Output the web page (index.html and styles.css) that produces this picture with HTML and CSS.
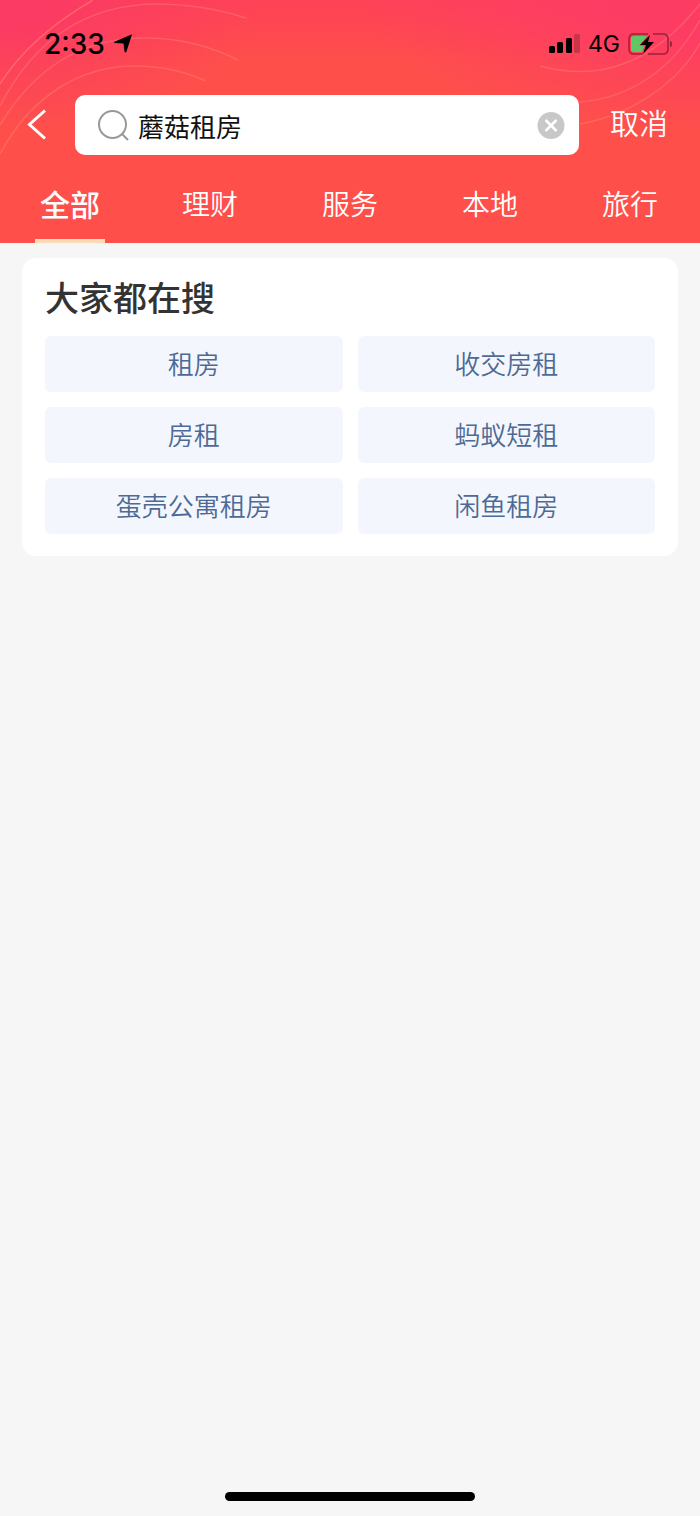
FILE: index.html
```html
<!DOCTYPE html>
<html lang="zh-CN">
<head>
    <meta charset="UTF-8">
    <meta name="viewport" content="width=device-width, initial-scale=1.0">
    <title>搜索</title>
    <link rel="stylesheet" href="styles.css">
</head>
<body>
    <header class="header">
        <!-- Decorative curves -->
        <svg class="header-lines" viewBox="0 0 700 243" preserveAspectRatio="none" aria-hidden="true">
            <path d="M0 84C22 49 55 22 93 0" opacity=".4"/>
            <path d="M0 106C35 38 88 5 155 4C190 4 218 9 246 18" opacity=".3"/>
            <path d="M0 125C36 65 84 38 145 38C180 38 210 46 238 60" opacity=".3"/>
            <path d="M0 154C32 94 82 66 135 66C165 66 186 72 206 81" opacity=".3"/>
            <path d="M540 66C600 82 652 64 700 4" opacity=".3"/>
            <path d="M580 102C630 98 672 70 700 20" opacity=".3"/>
            <path d="M580 124C635 114 680 80 700 43" opacity=".3"/>
        </svg>

        <!-- Status bar -->
        <div class="status-bar">
            <div class="status-group">
                <span class="time">2:33</span>
                <svg width="20" height="20" viewBox="0 0 20 20" aria-hidden="true">
                    <path d="M18.500 .5Q19 0 18.800 1L13.500 17.500Q12.500 19.500 11.500 17.500L10.500 9.500L2 9Q0 8.500 2 7.500Z"/>
                </svg>
            </div>
            <div class="status-group">
                <svg width="32" height="20" viewBox="0 0 32 20" aria-hidden="true">
                    <rect x="1" y="12" width="6" height="7" rx="1.500"/>
                    <rect x="9" y="8" width="6" height="11" rx="1.500"/>
                    <rect x="18" y="4" width="6" height="15" rx="1.500"/>
                    <rect x="26" y="0" width="6" height="19" rx="1.500" opacity=".2"/>
                </svg>
                <span class="network">4G</span>
                <svg width="46" height="22" viewBox="0 0 46 22" aria-hidden="true">
                    <path d="M20 1H6Q1 1 1 6V16Q1 21 6 21H15M25 1H35Q40 1 40 6V16Q40 21 35 21H20" fill="none" stroke="#9c2238" stroke-width="1.500"/>
                    <path d="M19 3H6Q3 3 3 6V16Q3 19 6 19H14L16 13H11Z" fill="#5fc763"/>
                    <path d="M22 2L12 12H18L15 21L26 9H20Z"/>
                    <path d="M42 8Q44 8 44 11Q44 14 42 14Z" fill="#9c2238"/>
                </svg>
            </div>
        </div>

        <!-- Search -->
        <form class="search-row">
            <button class="back-btn" type="button" aria-label="返回">
                <svg width="22" height="32" viewBox="0 0 22 32" aria-hidden="true">
                    <path d="M19 1.500L3.500 15.500L19 29.500" fill="none" stroke="#fff" stroke-width="3"/>
                </svg>
            </button>
            <div class="search-box">
                <svg width="32" height="32" viewBox="0 0 32 32" fill="none" stroke="#999" stroke-width="2" aria-hidden="true">
                    <circle cx="14.500" cy="15.500" r="13.500"/>
                    <path d="M24 25L30 31"/>
                </svg>
                <input class="search-input" type="text" value="蘑菇租房" aria-label="搜索">
                <button class="clear-btn" type="button" aria-label="清除">
                    <svg width="28" height="28" viewBox="0 0 28 28" aria-hidden="true">
                        <circle cx="14" cy="14.500" r="13.500" fill="#c8c8c8"/>
                        <path d="M8.500 9L19.500 20M19.500 9L8.500 20" stroke="#fff" stroke-width="2.500"/>
                    </svg>
                </button>
            </div>
            <button class="cancel-btn" type="button">取消</button>
        </form>

        <!-- Tabs -->
        <nav class="tabs">
            <a class="tab active" href="#">全部</a>
            <a class="tab" href="#">理财</a>
            <a class="tab" href="#">服务</a>
            <a class="tab" href="#">本地</a>
            <a class="tab" href="#">旅行</a>
        </nav>
    </header>

    <main class="content">
        <section class="card">
            <h1 class="card-title">大家都在搜</h1>
            <div class="chips">
                <a class="chip" href="#">租房</a>
                <a class="chip" href="#">收交房租</a>
                <a class="chip" href="#">房租</a>
                <a class="chip" href="#">蚂蚁短租</a>
                <a class="chip" href="#">蛋壳公寓租房</a>
                <a class="chip" href="#">闲鱼租房</a>
            </div>
        </section>
    </main>

    <div class="home-indicator"></div>
</body>
</html>
```

FILE: styles.css
```css
* {
    box-sizing: border-box;
}

body {
    margin: 0;
    min-height: 100vh;
    display: flex;
    flex-direction: column;
    background-color: #f6f6f6;
    font-family: Inter, "Noto Sans CJK SC", sans-serif;
}

button {
    padding: 0;
    border: none;
    background: none;
    font-family: inherit;
    cursor: pointer;
}

a {
    text-decoration: none;
}

svg {
    display: block;
    flex-shrink: 0;
}

/* Header */
.header {
    position: relative;
    background-color: #fe4f4b;
    background-image:
        radial-gradient(ellipse 260px 130px at 0 0, #fb3b63 20%, rgba(251, 59, 99, 0) 100%),
        radial-gradient(ellipse 340px 130px at 100% 0, #fd3c64 25%, rgba(253, 60, 100, 0) 100%),
        linear-gradient(#fe4257, #fe4f4b 60px);
}

.header-lines {
    position: absolute;
    top: 0;
    left: 0;
    width: 100%;
    height: 100%;
    fill: none;
    stroke: #ff9a80;
    stroke-width: 1.5;
}

.status-bar,
.search-row,
.tabs {
    position: relative;
    display: flex;
    align-items: center;
}

.status-bar {
    justify-content: space-between;
    height: 87px;
    padding: 0 26px 0 44px;
}

.status-group {
    display: flex;
    align-items: center;
    gap: 8px;
}

.time {
    font-size: 28px;
    font-weight: 500;
}

.network {
    font-size: 23px;
}

/* Search */
.search-row {
    height: 76px;
    padding: 0 32px 0 26px;
}

.back-btn {
    width: 49px;
}

.search-box {
    flex: 1;
    display: flex;
    align-items: center;
    gap: 8px;
    min-width: 0;
    height: 60px;
    padding: 0 14px 0 23px;
    border-radius: 10px;
    background-color: #fff;
}

.search-input {
    flex: 1;
    min-width: 0;
    padding: 0;
    border: none;
    outline: none;
    background: none;
    color: #111;
    font-family: inherit;
    font-size: 26px;
}

.cancel-btn {
    margin-left: 31px;
    color: #fff;
    font-size: 29px;
    font-weight: 350;
    line-height: 40px;
}

/* Tabs */
.tabs {
    height: 80px;
}

.tab {
    position: relative;
    flex: 1;
    height: 80px;
    color: #fff;
    font-size: 28px;
    font-weight: 350;
    line-height: 84px;
    text-align: center;
}

.tab.active {
    font-size: 30px;
    font-weight: 500;
}

.tab.active::after {
    content: "";
    position: absolute;
    left: 25%;
    bottom: 0;
    width: 50%;
    height: 4px;
    background-color: #ffdcb8;
}

/* Card */
.content {
    flex: 1;
    padding: 15px 22px;
}

.card {
    padding: 16px 23px 22px;
    border-radius: 14px;
    background-color: #fff;
}

.card-title {
    margin: 0 0 12px;
    color: #333;
    font-size: 34px;
    font-weight: 500;
    line-height: 50px;
}

.chips {
    display: grid;
    grid-template-columns: 1fr 1fr;
    gap: 15px;
}

.chip {
    height: 56px;
    border-radius: 6px;
    background-color: #f4f6fe;
    color: #4d6a95;
    font-size: 26px;
    font-weight: 350;
    line-height: 58px;
    text-align: center;
}

.home-indicator {
    align-self: center;
    width: 250px;
    height: 9px;
    margin-bottom: 15px;
    border-radius: 5px;
    background-color: #000;
}
```
